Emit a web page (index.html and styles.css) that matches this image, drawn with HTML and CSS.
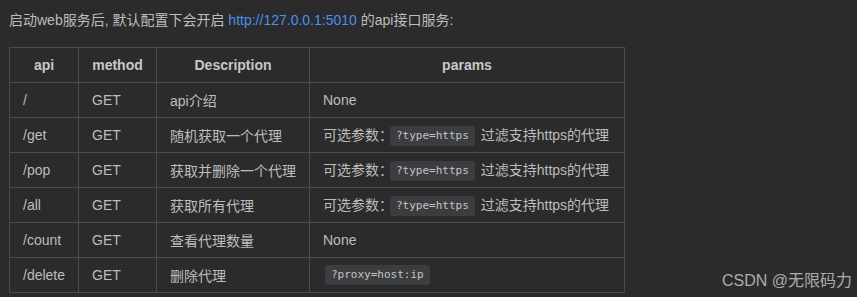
FILE: index.html
```html
<!DOCTYPE html>
<html lang="zh">
<head>
<meta charset="utf-8">
<link rel="stylesheet" href="styles.css">
</head>
<body>
<p class="intro">启动web服务后, 默认配置下会开启 <a class="link" href="#">http://127.0.0.1:5010</a> 的api接口服务:</p>
<table class="api-table">
  <colgroup>
    <col class="c1"><col class="c2"><col class="c3"><col class="c4">
  </colgroup>
  <thead>
    <tr><th>api</th><th>method</th><th>Description</th><th>params</th></tr>
  </thead>
  <tbody>
    <tr><td>/</td><td>GET</td><td>api介绍</td><td>None</td></tr>
    <tr><td>/get</td><td>GET</td><td>随机获取一个代理</td><td>可选参数：<code class="code code-inline">?type=https</code> 过滤支持https的代理</td></tr>
    <tr><td>/pop</td><td>GET</td><td>获取并删除一个代理</td><td>可选参数：<code class="code code-inline">?type=https</code> 过滤支持https的代理</td></tr>
    <tr><td>/all</td><td>GET</td><td>获取所有代理</td><td>可选参数：<code class="code code-inline">?type=https</code> 过滤支持https的代理</td></tr>
    <tr><td>/count</td><td>GET</td><td>查看代理数量</td><td>None</td></tr>
    <tr><td>/delete</td><td>GET</td><td>删除代理</td><td><code class="code">?proxy=host:ip</code></td></tr>
  </tbody>
</table>
<div class="watermark">CSDN @无限码力</div>
</body>
</html>
```
FILE: styles.css
```css
html, body {
  margin: 0;
  padding: 0;
  background: #2b2b2b;
}
body {
  position: relative;
  width: 857px;
  height: 297px;
  overflow: hidden;
  font-family: "Liberation Sans", Arial, "Noto Sans CJK SC", sans-serif;
  font-size: 14px;
  color: #bdbdbd;
}
.intro {
  margin: 9px 9px 16px;
  line-height: 22px;
}
.link {
  color: #4a8ff0;
  text-decoration: none;
}
.api-table {
  margin-left: 9px;
  border-collapse: collapse;
  table-layout: fixed;
  width: 615px;
}
.c1 { width: 69px; }
.c2 { width: 78px; }
.c3 { width: 153px; }
.c4 { width: 315px; }
.api-table th,
.api-table td {
  border: 1px solid #4c4c4c;
  height: 35px;
  padding: 0 13px;
  box-sizing: border-box;
  white-space: nowrap;
  vertical-align: middle;
}
.api-table th {
  font-weight: bold;
  text-align: center;
  color: #c8c8c8;
}
.api-table td {
  text-align: left;
}
.code {
  display: inline-block;
  font-family: "DejaVu Sans Mono", "Liberation Mono", monospace;
  font-size: 11px;
  line-height: 14px;
  padding: 3px 6px;
  margin: 0 2px;
  background: #3b3d40;
  border-radius: 3px;
  color: #c4c4c4;
  vertical-align: middle;
}
.code-inline {
  margin-left: -3px;
}
.watermark {
  position: absolute;
  right: 5px;
  bottom: 6px;
  font-size: 16px;
  color: #ababab;
}
```
